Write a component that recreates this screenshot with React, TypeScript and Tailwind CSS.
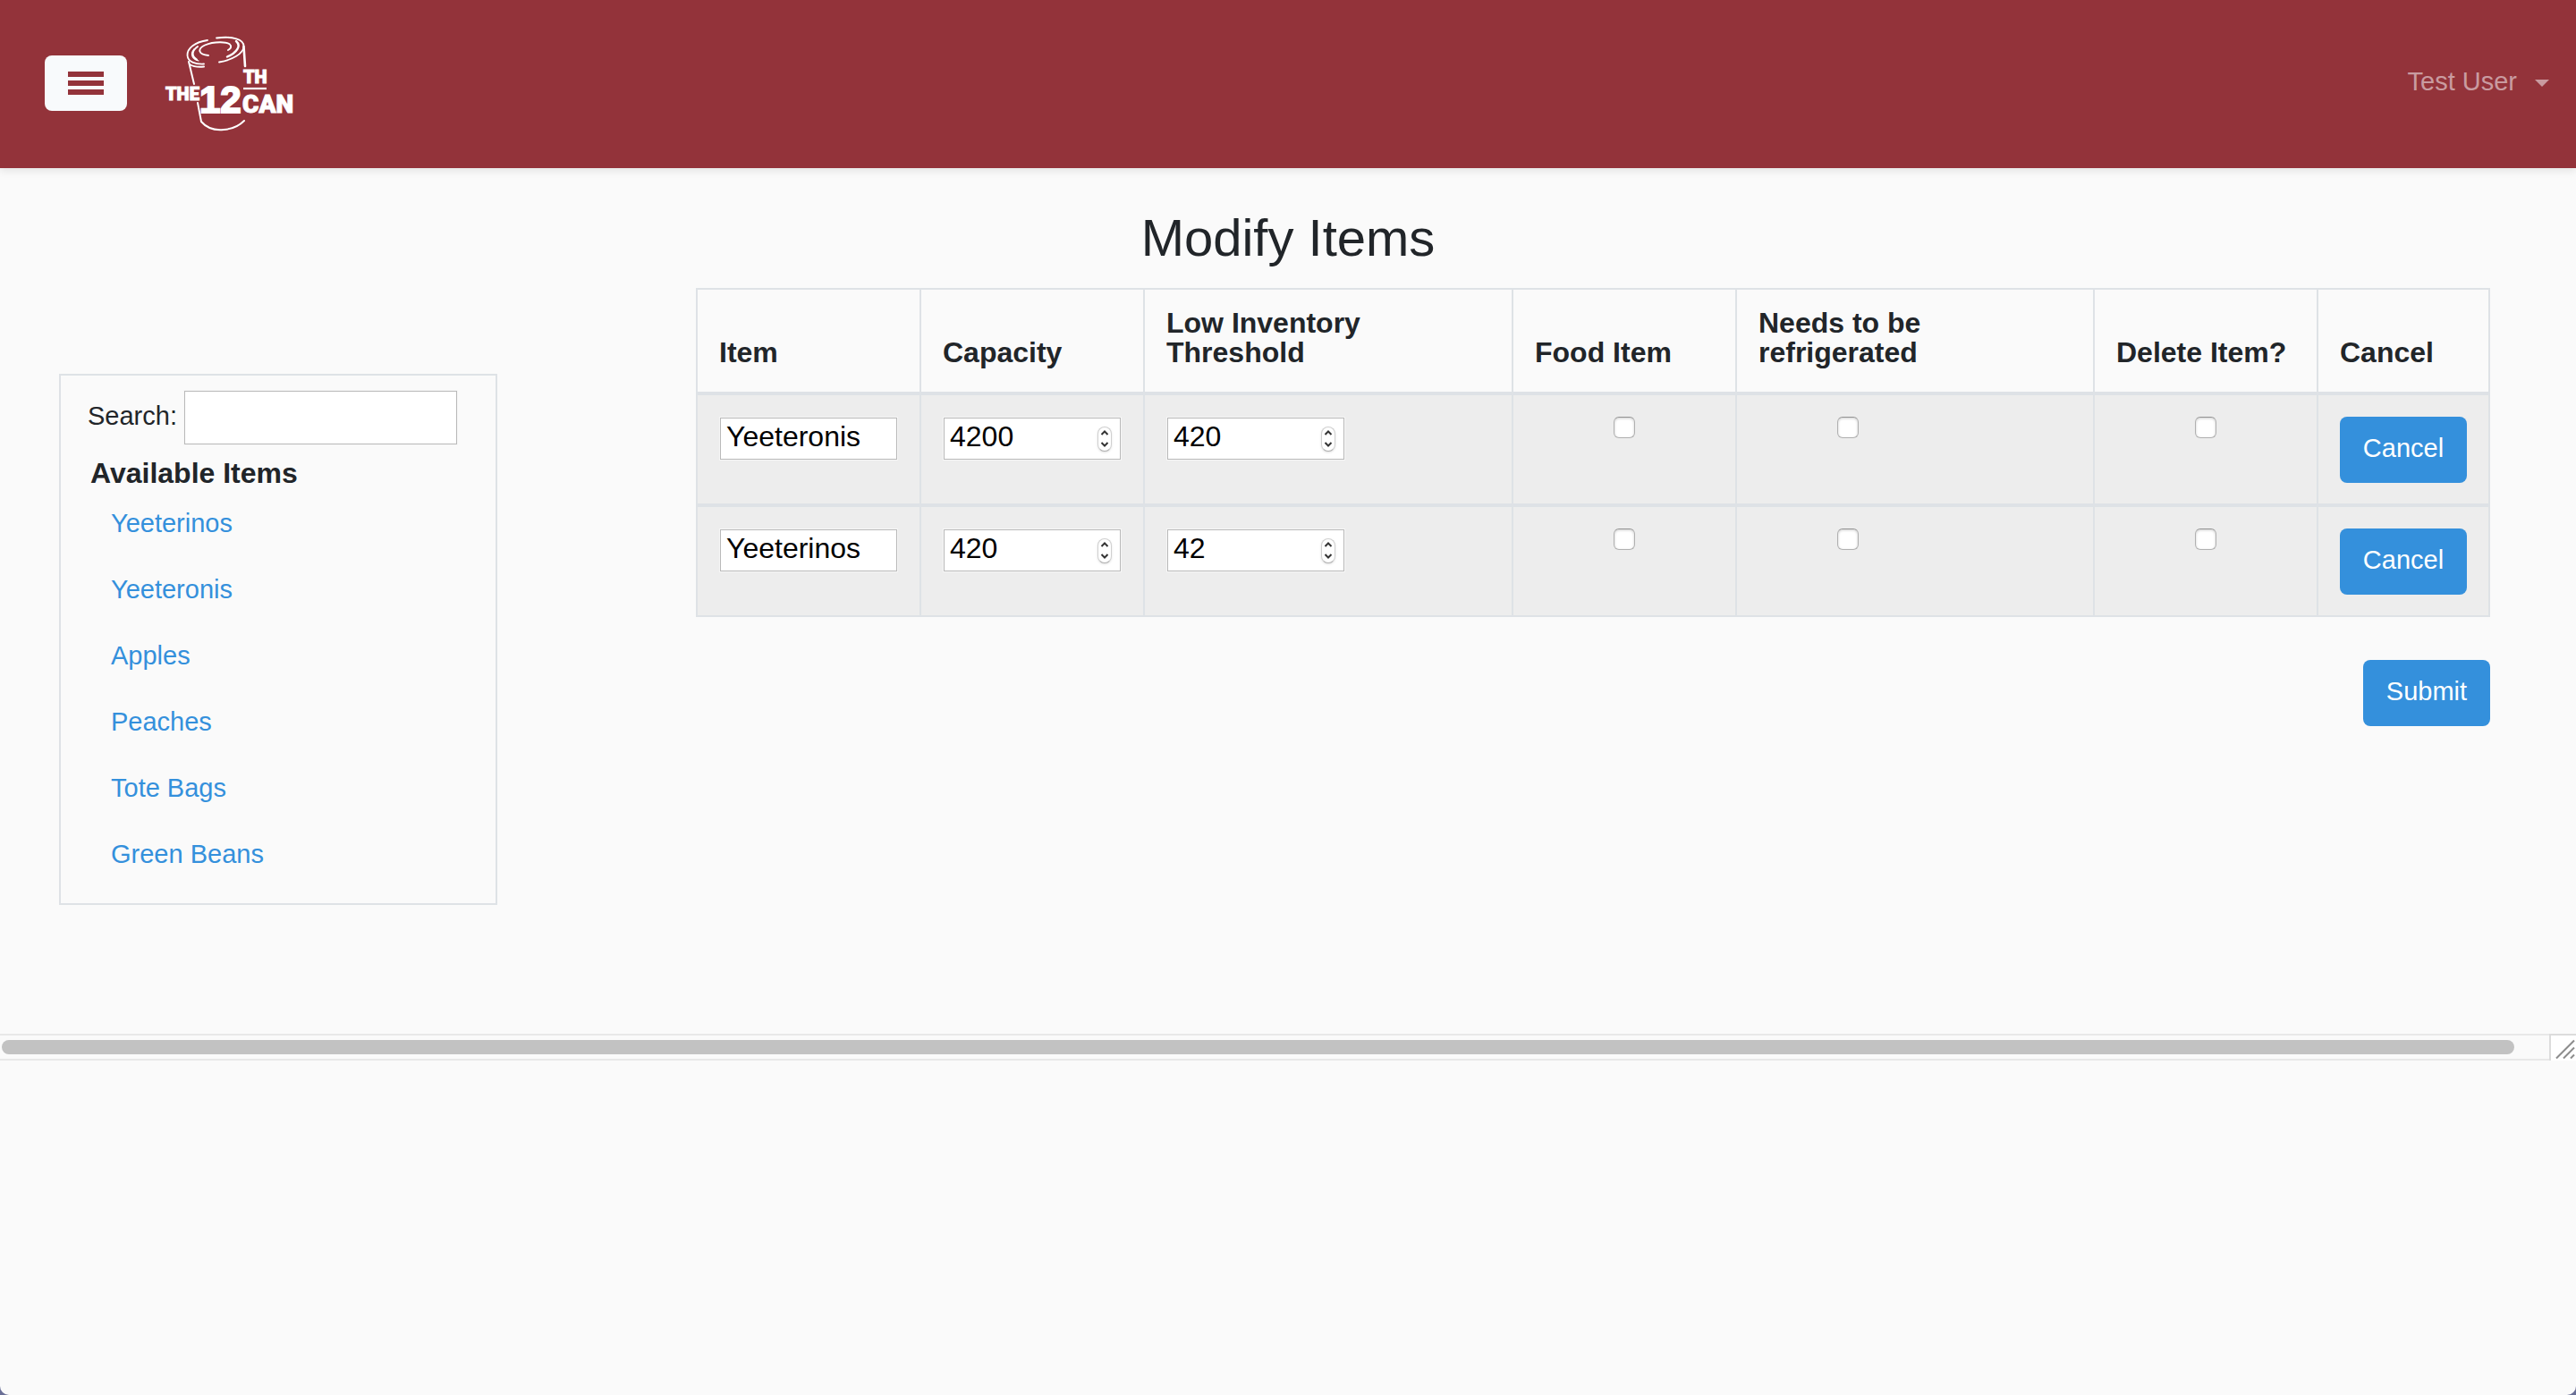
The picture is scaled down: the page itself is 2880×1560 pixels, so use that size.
import { useState } from "react";

const links = ["Yeeterinos", "Yeeteronis", "Apples", "Peaches", "Tote Bags", "Green Beans"];

const columns = [
  { title: "Item", width: "w-[250px]" },
  { title: "Capacity", width: "w-[250px]" },
  { title: "Low Inventory Threshold", width: "w-[412px]" },
  { title: "Food Item", width: "w-[250px]" },
  { title: "Needs to be refrigerated", width: "w-[400px]" },
  { title: "Delete Item?", width: "w-[250px]" },
  { title: "Cancel", width: "w-[192px]" },
];

const rows = [
  { name: "Yeeteronis", capacity: "4200", threshold: "420" },
  { name: "Yeeterinos", capacity: "420", threshold: "42" },
];

function Logo() {
  return (
    <svg viewBox="0 0 150 110" className="h-[110px] w-[150px]" role="img" aria-label="The 12th Can">
      <g fill="none" stroke="#fff" strokeLinecap="round">
        <path d="M48 6C34 8 25 15 25.500 23C26 30 34 33 44 32.500" strokeWidth="1.800" />
        <path d="M58 3.500C76 1 89 5 88.500 13C88 21 76 28 61 30.500" strokeWidth="1.800" />
        <path d="M37 13C30 18 30 24 36 27.500" strokeWidth="2" />
        <path d="M33 16C28 22 31 27 38 29" strokeWidth="1.200" />
        <path d="M80 7C86 12 81 20 70 24.500" strokeWidth="2.400" />
        <path d="M49 23C38 22 36 16 45 11.500C55 7 72 7 74 12C74.500 14 73 16 71 17" strokeWidth="1.900" />
        <path d="M27 30L33 55M37 76L41 97C47 104 56 107 66 106C76 105.500 84 101 89 96" strokeWidth="2" />
        <path d="M28 33C33 36 39 36 44 35.500" strokeWidth="2" />
        <path d="M88.500 13L90 35" strokeWidth="2.600" />
        <path d="M88 60H114" strokeWidth="2.200" strokeLinecap="butt" />
      </g>
      <g fill="#fff" stroke="#fff" fontFamily="Roboto, 'Liberation Sans', sans-serif" fontWeight="900">
        <text x="1" y="73" fontSize="20" strokeWidth="1">THE</text>
        <text x="39" y="87" fontSize="42" strokeWidth="2" fontFamily="'Liberation Sans', sans-serif">12</text>
        <text x="88" y="54" fontSize="20" strokeWidth="1">TH</text>
        <text x="87" y="87" fontSize="28" strokeWidth="1">CAN</text>
      </g>
    </svg>
  );
}

function TextField({ label, value }: { label: string; value: string }) {
  return (
    <input
      type="text"
      aria-label={label}
      defaultValue={value}
      className="mt-px block h-[47px] w-[198px] border border-[#b9b9b9] bg-white px-[6px] pb-[5px] text-[32px] text-black outline outline-[#f6f6f6]"
    />
  );
}

function NumberField({ label, value }: { label: string; value: string }) {
  const [amount, setAmount] = useState(value);
  const step = (delta: number) => setAmount(String(Number(amount) + delta));
  return (
    <div className="mt-px flex h-[47px] w-[198px] items-center border border-[#b9b9b9] bg-white pr-[9px] outline outline-[#f6f6f6]">
      <input
        type="text"
        inputMode="numeric"
        aria-label={label}
        value={amount}
        onChange={(e) => setAmount(e.target.value)}
        className="h-full min-w-0 flex-1 bg-transparent pb-[5px] pl-[6px] text-[32px] text-black outline-none"
      />
      <div className="flex h-[28px] w-[16px] flex-col overflow-hidden rounded-full border border-[#d0d0d0] border-b-[#b0b0b0] bg-white text-[#333] shadow-sm">
        <button type="button" aria-label={`Increase ${label}`} onClick={() => step(1)} className="flex flex-1 items-center justify-center">
          <svg viewBox="0 0 10 6" className="h-[6px] w-[10px]" fill="none" stroke="currentColor" strokeWidth="2">
            <path d="M1.500 5L5 1.500L8.500 5" />
          </svg>
        </button>
        <button type="button" aria-label={`Decrease ${label}`} onClick={() => step(-1)} className="flex flex-1 items-center justify-center">
          <svg viewBox="0 0 10 6" className="h-[6px] w-[10px]" fill="none" stroke="currentColor" strokeWidth="2">
            <path d="M1.500 1L5 4.500L8.500 1" />
          </svg>
        </button>
      </div>
    </div>
  );
}

function Tick({ label }: { label: string }) {
  return (
    <div className="flex w-[198px] justify-center">
      <input
        type="checkbox"
        aria-label={label}
        className="block size-6 appearance-none rounded-md border border-[#b0b0b0] border-t-[#939393] bg-white shadow-[inset_0_1px_3px_rgba(0,0,0,0.2)] checked:bg-[#3490dc]"
      />
    </div>
  );
}

function PrimaryButton({ children, submit }: { children: string; submit?: boolean }) {
  return (
    <button
      type={submit ? "submit" : "button"}
      className="flex h-[74px] w-[142px] items-center justify-center rounded-lg bg-[#3490dc] pb-[5px] text-[29px] text-white"
    >
      {children}
    </button>
  );
}

export default function App() {
  return (
    <div className="bg-[#6a6f96]">
      <div className="min-h-screen rounded-b-[10px] bg-[#fafafa] font-['Liberation_Sans',Arial,sans-serif] text-[29px] leading-[36px] text-[#212529]">
        <header className="flex h-[188px] items-center justify-between bg-[#93333a] pr-[30px] pb-[2px] pl-[50px] shadow-[0_4px_8px_rgba(0,0,0,0.08)]">
          <div className="flex items-center gap-[42px]">
            <button
              type="button"
              aria-label="Menu"
              className="flex h-[62px] w-[92px] flex-col items-center justify-center gap-1 rounded-lg bg-[#f8fafc]"
            >
              <span className="h-[6px] w-10 bg-[#93333a]" />
              <span className="h-[6px] w-10 bg-[#93333a]" />
              <span className="h-[6px] w-10 bg-[#93333a]" />
            </button>
            <a href="#home" className="pt-[2px]">
              <Logo />
            </a>
          </div>
          <button type="button" className="flex items-center gap-5 pb-1 text-[#c99ba0]">
            <span>Test User</span>
            <svg viewBox="0 0 16 8" className="mt-1 h-2 w-4" fill="currentColor">
              <path d="M0 0H16L8 8Z" />
            </svg>
          </button>
        </header>

        <main className="pt-[43px]">
          <h1 className="text-center text-[58px] leading-[70px]">Modify Items</h1>

          <div className="flex items-start gap-[222px] pr-[96px] pb-[144px] pl-[66px]">
            <aside className="mt-[117px] w-[490px] shrink-0 border-2 border-[#dee2e6] pt-[17px] pb-[18px] pl-[30px]">
              <div className="flex items-center gap-2">
                <label htmlFor="search" className="pb-1">Search:</label>
                <input
                  id="search"
                  type="text"
                  className="h-[60px] w-[305px] border border-[#b9b9b9] bg-white px-2 text-[29px] outline outline-[#f6f6f6]"
                />
              </div>
              <h2 className="mt-[14px] pl-[3px] text-[32px] leading-[37px] font-bold">Available Items</h2>
              <ul className="pl-[26px]">
                {links.map((name) => (
                  <li key={name} className="flex h-[74px] items-center">
                    <a href="#item" className="text-[#3490dc]">{name}</a>
                  </li>
                ))}
              </ul>
            </aside>

            <form className="mt-[21px] min-w-0 flex-1" onSubmit={(e) => e.preventDefault()}>
              <table className="w-full table-fixed border-collapse border-2 border-[#dee2e6]">
                <thead>
                  <tr>
                    {columns.map((column) => (
                      <th
                        key={column.title}
                        scope="col"
                        className={`${column.width} border-2 border-b-4 border-[#dee2e6] px-[24px] pt-[21px] pb-[27px] text-left align-bottom text-[32px] leading-[33px] font-bold`}
                      >
                        <span className="block max-w-[240px] whitespace-normal">{column.title}</span>
                      </th>
                    ))}
                  </tr>
                </thead>
                <tbody>
                  {rows.map((row, index) => (
                    <tr
                      key={row.name}
                      className="bg-[#ededed] [&>td]:border-2 [&>td]:border-[#dee2e6] [&>td]:px-[24px] [&>td]:pt-6 [&>td]:pb-[23px] [&>td]:align-top [&>td:not(:last-child)]:pl-[25px] [&:not(:last-child)>td]:border-b-4"
                    >
                      <td><TextField label={`Item ${index + 1}`} value={row.name} /></td>
                      <td><NumberField label={`Capacity of ${row.name}`} value={row.capacity} /></td>
                      <td><NumberField label={`Low inventory threshold of ${row.name}`} value={row.threshold} /></td>
                      <td><Tick label={`${row.name} is a food item`} /></td>
                      <td><Tick label={`${row.name} needs to be refrigerated`} /></td>
                      <td><Tick label={`Delete ${row.name}`} /></td>
                      <td><PrimaryButton>Cancel</PrimaryButton></td>
                    </tr>
                  ))}
                </tbody>
              </table>
              <div className="mt-[48px] flex justify-end">
                <PrimaryButton submit>Submit</PrimaryButton>
              </div>
            </form>
          </div>
        </main>

        <div className="flex h-[30px]" aria-hidden="true">
          <div className="flex flex-1 items-center border-y-2 border-[#e8e8e8] pr-[39px] pl-[2px]">
            <div className="h-4 flex-1 rounded-full bg-[#c2c2c2]" />
          </div>
          <svg viewBox="0 0 30 30" className="h-[30px] w-[30px]">
            <path d="M0 0H30V30H0Z" fill="#dcdcdc" />
            <path d="M2 2H30V30H2Z" fill="#fff" />
            <path d="M8 27.500L28 7.500M16 27.500L28 15.500M24 27.500L28 23.500" fill="none" stroke="#8c8c8c" strokeWidth="2" />
          </svg>
        </div>
      </div>
    </div>
  );
}
